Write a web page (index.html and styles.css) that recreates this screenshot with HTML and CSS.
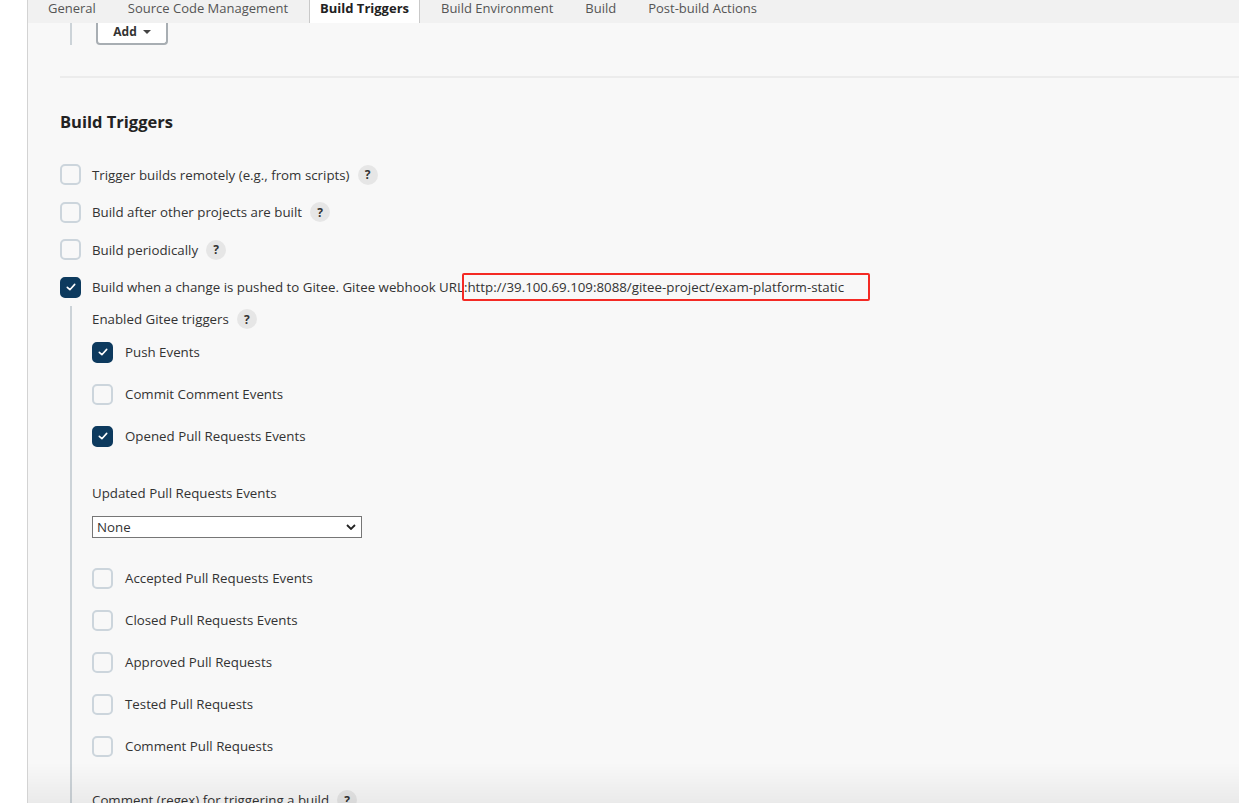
FILE: index.html
```html
<!DOCTYPE html>
<html>
<head>
<meta charset="utf-8">
<link rel="stylesheet" href="styles.css">
</head>
<body>
<div class="gutter"></div>
<div class="main">
  <nav class="tabs">
    <span class="tab">General</span>
    <span class="tab">Source Code Management</span>
    <span class="tab active">Build Triggers</span>
    <span class="tab">Build Environment</span>
    <span class="tab">Build</span>
    <span class="tab">Post-build Actions</span>
  </nav>
  <div class="content">
    <div class="prev-section">
      <button class="add-btn">Add <span class="caret"></span></button>
    </div>
    <div class="separator"></div>
    <h2 class="heading">Build Triggers</h2>

    <div class="row">
      <span class="cb"></span><span class="label">Trigger builds remotely (e.g., from scripts)</span><span class="help">?</span>
    </div>
    <div class="row">
      <span class="cb"></span><span class="label">Build after other projects are built</span><span class="help">?</span>
    </div>
    <div class="row">
      <span class="cb"></span><span class="label">Build periodically</span><span class="help">?</span>
    </div>
    <div class="row">
      <span class="cb checked"><svg viewBox="0 0 12 12" width="12" height="12"><path d="M2.3 6.3 L4.9 8.7 L9.7 3.4" fill="none" stroke="#fff" stroke-width="1.6" stroke-linecap="round" stroke-linejoin="round"/></svg></span><span class="label">Build when a change is pushed to Gitee. Gitee webhook URL:<span class="url">http://39.100.69.109:8088/gitee-project/exam-platform-static</span></span>
    </div>

    <div class="nested">
      <div class="sub-title">Enabled Gitee triggers <span class="help">?</span></div>
      <div class="row sub">
        <span class="cb checked"><svg viewBox="0 0 12 12" width="12" height="12"><path d="M2.3 6.3 L4.9 8.7 L9.7 3.4" fill="none" stroke="#fff" stroke-width="1.6" stroke-linecap="round" stroke-linejoin="round"/></svg></span><span class="label">Push Events</span>
      </div>
      <div class="row sub">
        <span class="cb"></span><span class="label">Commit Comment Events</span>
      </div>
      <div class="row sub">
        <span class="cb checked"><svg viewBox="0 0 12 12" width="12" height="12"><path d="M2.3 6.3 L4.9 8.7 L9.7 3.4" fill="none" stroke="#fff" stroke-width="1.6" stroke-linecap="round" stroke-linejoin="round"/></svg></span><span class="label">Opened Pull Requests Events</span>
      </div>

      <div class="field-label">Updated Pull Requests Events</div>
      <div class="select">
        <span>None</span>
        <svg viewBox="0 0 10 6" width="10" height="6"><path d="M1 1 L5 5 L9 1" fill="none" stroke="#222" stroke-width="1.8"/></svg>
      </div>

      <div class="row sub first-after-select">
        <span class="cb"></span><span class="label">Accepted Pull Requests Events</span>
      </div>
      <div class="row sub">
        <span class="cb"></span><span class="label">Closed Pull Requests Events</span>
      </div>
      <div class="row sub">
        <span class="cb"></span><span class="label">Approved Pull Requests</span>
      </div>
      <div class="row sub">
        <span class="cb"></span><span class="label">Tested Pull Requests</span>
      </div>
      <div class="row sub">
        <span class="cb"></span><span class="label">Comment Pull Requests</span>
      </div>

      <div class="sub-title regex">Comment (regex) for triggering a build <span class="help">?</span></div>
    </div>
  </div>
</div>
<div class="bottom-bar"></div>
</body>
</html>
```

FILE: styles.css
```css
html, body {
  margin: 0;
  padding: 0;
  height: 100%;
  overflow: hidden;
}
body {
  display: flex;
  font-family: "Open Sans", "Noto Sans", "Liberation Sans", sans-serif;
  font-size: 13.3px;
  color: #333;
  background: #fff;
}
.gutter {
  width: 27px;
  flex: none;
  background: #fff;
}
.main {
  flex: 1;
  border-left: 1px solid #d3d3d3;
  background: #f8f8f8;
  min-height: 100%;
}
.tabs {
  height: 23px;
  background: #f1f1f1;
  display: flex;
  padding-left: 4px;
  font-size: 13px;
}
.tab {
  margin: 0 5px;
  padding: 0 10px;
  line-height: 16px;
  height: 23px;
  box-sizing: border-box;
  border-left: 1px solid transparent;
  border-right: 1px solid transparent;
  color: #555;
  white-space: nowrap;
}
.tab.active {
  background: #fff;
  border-color: #c9c9c9;
  font-weight: 700;
  color: #222;
}
.content {
  padding-left: 32px;
}
.prev-section {
  margin-left: 10px;
  border-left: 2px solid #ccd3d8;
  height: 22px;
  padding-left: 24px;
}
.add-btn {
  display: flex;
  align-items: center;
  gap: 6px;
  height: 22px;
  width: 72px;
  justify-content: center;
  padding: 0;
  padding-bottom: 3px;
  background: #fff;
  border: 2px solid #a8aeb3;
  border-top: none;
  border-radius: 0 0 4px 4px;
  font-family: inherit;
  font-weight: 700;
  font-size: 12px;
  color: #333;
}
.caret {
  width: 0;
  height: 0;
  border-left: 4px solid transparent;
  border-right: 4px solid transparent;
  border-top: 4px solid #444;
}
.separator {
  margin-top: 31px;
  height: 2px;
  background: #ececec;
}
.heading {
  margin: 32px 0 0;
  font-size: 16.5px;
  line-height: 24px;
  font-weight: 700;
  color: #222;
}
.row {
  display: flex;
  align-items: center;
  height: 37.5px;
}
.heading + .row {
  margin-top: 22px;
}
.row.sub {
  height: 42px;
}
.cb {
  width: 21px;
  height: 21px;
  box-sizing: border-box;
  border: 2px solid #ccd5dc;
  border-radius: 5px;
  flex: none;
  margin-right: 11px;
  display: flex;
  align-items: center;
  justify-content: center;
}
.row.sub .cb {
  margin-right: 12px;
}
.cb.checked {
  background: #0d3a5e;
  border-color: #0d3a5e;
}
.label {
  white-space: nowrap;
}
.url {
  display: inline-block;
  border: 2px solid #f42a24;
  border-radius: 2px;
  padding: 3px 24px 3px 3px;
  margin-left: -5px;
}
.help {
  display: inline-flex;
  align-items: center;
  justify-content: center;
  width: 20px;
  height: 20px;
  border-radius: 50%;
  background: #e6e6e6;
  color: #333;
  font-weight: 700;
  font-size: 12px;
  margin-left: 8px;
  flex: none;
}
.nested {
  margin-left: 10px;
  border-left: 2px solid #ccd3d8;
  padding-left: 20px;
  padding-top: 3px;
  min-height: 600px;
}
.sub-title {
  display: flex;
  align-items: center;
  height: 20px;
  margin-bottom: 2px;
}
.field-label {
  margin-top: 26px;
  line-height: 20px;
}
.select {
  margin-top: 13px;
  width: 270px;
  height: 22px;
  box-sizing: border-box;
  border: 1px solid #767676;
  background: #fff;
  display: flex;
  align-items: center;
  justify-content: space-between;
  padding: 0 5px 0 4px;
}
.first-after-select {
  margin-top: 19px;
}
.sub-title.regex {
  margin-top: 23px;
}
.bottom-bar {
  position: fixed;
  left: 0;
  right: 0;
  bottom: 0;
  height: 9px;
  background: #fff;
}
.bottom-bar::before {
  content: "";
  position: absolute;
  left: 28px;
  right: 0;
  bottom: 9px;
  height: 40px;
  background: linear-gradient(to bottom, rgba(0,0,0,0), rgba(0,0,0,0.055));
}
```
